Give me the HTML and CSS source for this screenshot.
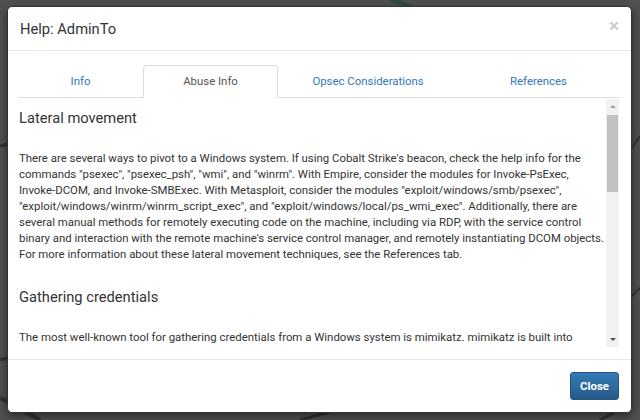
FILE: index.html
```html
<!DOCTYPE html>
<html lang="en">
<head>
    <meta charset="UTF-8">
    <title>Help: AdminTo</title>
    <link rel="stylesheet" href="styles.css">
</head>
<body>
    <svg class="graph" width="640" height="420" viewBox="0 0 640 420">
        <line x1="385" y1="-4" x2="412" y2="8" stroke="#2f4a48" stroke-width="5"/>
        <line x1="0" y1="146" x2="8" y2="144" stroke="#333" stroke-width="3"/>
        <line x1="632" y1="148" x2="640" y2="136" stroke="#333" stroke-width="2"/>
        <line x1="632" y1="296" x2="640" y2="288" stroke="#333" stroke-width="2"/>
        <line x1="0" y1="360" x2="8" y2="358" stroke="#333" stroke-width="3"/>
        <line x1="0" y1="398" x2="40" y2="420" stroke="#333" stroke-width="4"/>
        <line x1="300" y1="420" x2="330" y2="412" stroke="#333" stroke-width="3"/>
        <line x1="600" y1="420" x2="615" y2="412" stroke="#333" stroke-width="3"/>
    </svg>

    <div class="modal">
        <div class="modal-header">
            <h4 class="modal-title">Help: AdminTo</h4>
            <span class="close">&times;</span>
        </div>
        <div class="modal-body">
            <ul class="nav-tabs">
                <li><a href="#">Info</a></li>
                <li class="active"><a href="#">Abuse Info</a></li>
                <li><a href="#">Opsec Considerations</a></li>
                <li><a href="#">References</a></li>
            </ul>
            <div class="scroll-box">
                <div class="tab-content">
                    <h4>Lateral movement</h4>
                    <p>There are several ways to pivot to a Windows system. If using Cobalt Strike's beacon, check the help info for the commands "psexec", "psexec_psh", "wmi", and "winrm". With Empire, consider the modules for Invoke-PsExec, Invoke-DCOM, and Invoke-SMBExec. With Metasploit, consider the modules "exploit/windows/smb/psexec", "exploit/windows/winrm/winrm_script_exec", and "exploit/windows/local/ps_wmi_exec". Additionally, there are several manual methods for remotely executing code on the machine, including via RDP, with the service control binary and interaction with the remote machine's service control manager, and remotely instantiating DCOM objects. For more information about these lateral movement techniques, see the References tab.</p>
                    <h4>Gathering credentials</h4>
                    <p>The most well-known tool for gathering credentials from a Windows system is mimikatz. mimikatz is built into Cobalt Strike's beacon, Empire, and Meterpreter. While running in a high integrity process with SeDebugPrivilege, execute one or more of mimikatz's credential gathering techniques (e.g.: sekurlsa::wdigest, sekurlsa::logonpasswords, etc.), then parse or investigate the output to find clear-text credentials for other high value users.</p>
                </div>
                <div class="scrollbar">
                    <span class="arrow-up"></span>
                    <div class="track"><div class="thumb"></div></div>
                    <span class="arrow-down"></span>
                </div>
            </div>
        </div>
        <div class="modal-footer">
            <button class="btn-primary">Close</button>
        </div>
    </div>
</body>
</html>
```

FILE: styles.css
```css
body {
    margin: 0;
    width: 640px;
    height: 420px;
    overflow: hidden;
    background-color: #505050;
    font-family: Roboto, "Liberation Sans", sans-serif;
    font-size: 11.4px;
    color: #333;
}
.graph {
    position: absolute;
    left: 0;
    top: 0;
}
.modal {
    position: relative;
    margin: 6px 0 0 7px;
    width: 623px;
    height: 405px;
    background-color: #fff;
    border: 1px solid #333;
    border-radius: 5px;
    box-shadow: 0 3px 9px rgba(0, 0, 0, 0.5);
    display: flex;
    flex-direction: column;
}
.modal-header {
    height: 44px;
    padding: 0 12px 0 12px;
    border-bottom: 1px solid #e5e5e5;
    display: flex;
    align-items: center;
    justify-content: space-between;
}
.modal-title {
    margin: 0;
    font-size: 14.7px;
    font-weight: normal;
    color: #333;
}
.close {
    font-size: 19px;
    font-weight: bold;
    color: #000;
    opacity: 0.2;
    line-height: 1;
    margin-top: -6px;
}
.modal-body {
    padding: 14px 12px 12px 10px;
}
.nav-tabs {
    list-style: none;
    margin: 0;
    padding: 0;
    display: grid;
    grid-template-columns: 125px 135px 180px 1fr;
    border-bottom: 1px solid #ddd;
}
.nav-tabs li {
    margin-bottom: -1px;
}
.nav-tabs a {
    display: block;
    height: 31px;
    line-height: 31px;
    text-align: center;
    color: #337ab7;
    text-decoration: none;
    border: 1px solid transparent;
    border-radius: 4px 4px 0 0;
}
.nav-tabs .active a {
    color: #555;
    border-color: #ddd;
    border-bottom-color: #fff;
    background-color: #fff;
}
.scroll-box {
    display: flex;
    height: 248px;
    padding-top: 1px;
}
.tab-content {
    flex: 1;
    overflow: hidden;
    padding-left: 1px;
    padding-right: 2px;
}
.tab-content h4 {
    margin: 9px 0 22px;
    font-size: 14.7px;
    font-weight: normal;
    line-height: 20px;
}
.tab-content p {
    margin: 0 0 25px;
    line-height: 16px;
}
.scrollbar {
    width: 13px;
    background-color: #f1f1f1;
    display: flex;
    flex-direction: column;
    align-items: center;
}
.arrow-up,
.arrow-down {
    height: 15px;
    display: flex;
    align-items: center;
}
.arrow-up::before {
    content: "";
    border: 3px solid transparent;
    border-top: 0;
    border-bottom: 3px solid #a3a3a3;
}
.arrow-down::before {
    content: "";
    border: 3px solid transparent;
    border-bottom: 0;
    border-top: 3px solid #505050;
}
.track {
    flex: 1;
    width: 100%;
    padding: 1px 1px 0;
    box-sizing: border-box;
}
.thumb {
    height: 77px;
    background-color: #c1c1c1;
}
.modal-footer {
    border-top: 1px solid #e5e5e5;
    padding: 12px 12px 12px;
    display: flex;
    justify-content: flex-end;
}
.btn-primary {
    height: 28px;
    padding: 0 9px;
    font-family: Roboto, "Liberation Sans", sans-serif;
    font-size: 11.4px;
    font-weight: bold;
    color: #fff;
    background-image: linear-gradient(#337ab7, #265a88);
    border: 1px solid #245580;
    border-radius: 3px;
}
```
